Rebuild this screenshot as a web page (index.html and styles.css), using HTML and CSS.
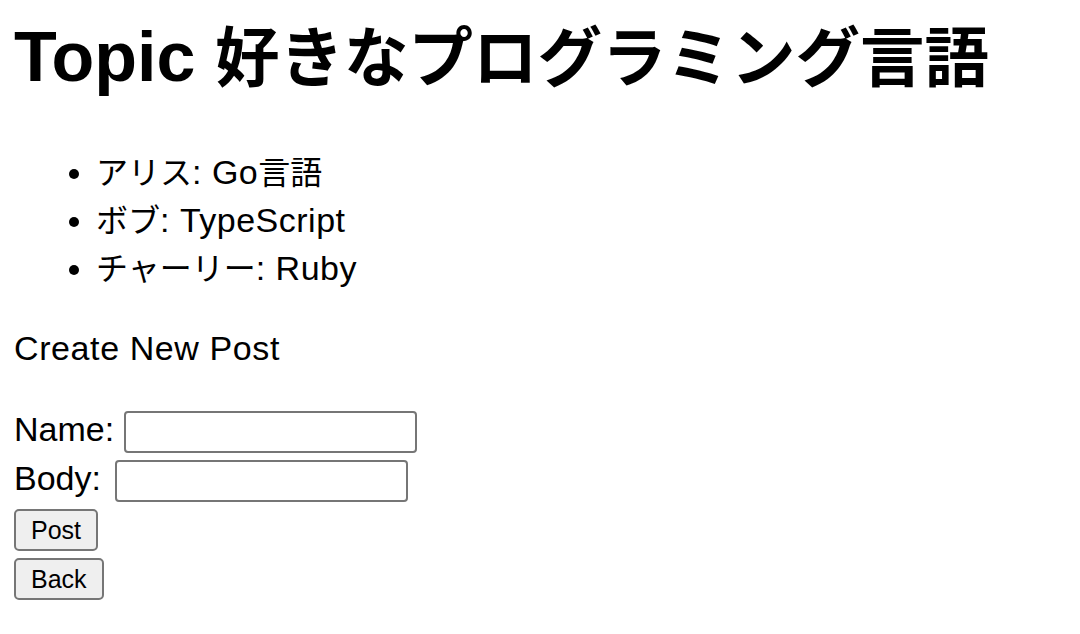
FILE: index.html
```html
<!DOCTYPE html>
<html lang="ja">
<head>
<meta charset="utf-8">
<title>Topic</title>
<link rel="stylesheet" href="styles.css">
</head>
<body>
<h1 class="title">Topic <span class="ja">好きなプログラミング言語</span></h1>
<ul class="posts">
  <li><span class="ja">アリス</span>: Go<span class="ja">言語</span></li>
  <li><span class="ja">ボブ</span>: TypeScript</li>
  <li><span class="ja">チャーリー</span>: Ruby</li>
</ul>
<p class="subtitle">Create New Post</p>
<form class="post-form">
  <div class="field name-field"><label class="label" for="name">Name:</label><input class="input" id="name" type="text"></div>
  <div class="field body-field"><label class="label label-body" for="body">Body:</label><input class="input" id="body" type="text"></div>
  <div class="field"><button class="btn" type="submit">Post</button></div>
  <div class="field"><button class="btn" type="button">Back</button></div>
</form>
</body>
</html>
```

FILE: styles.css
```css
html, body {
  background: #ffffff;
}
body {
  margin: 0;
  padding: 9px 14px 0;
  color: #000000;
  font-family: "Liberation Sans", "Noto Sans CJK JP", sans-serif;
  font-size: 34px;
}
.ja {
  font-family: "Noto Sans CJK JP", sans-serif;
  font-size: 32px;
  line-height: 1;
  letter-spacing: 0;
}
.title {
  margin: 0;
  font-size: 70px;
  font-weight: bold;
  line-height: 96px;
}
.title .ja {
  font-size: 64.5px;
}
.posts {
  margin: 43px 0 0;
  padding-left: 82px;
  line-height: 48px;
  letter-spacing: 0.5px;
}
.subtitle {
  margin: 32px 0 39px;
  line-height: 48px;
  letter-spacing: 0.6px;
}
.post-form {
  display: flex;
  flex-direction: column;
  align-items: flex-start;
  gap: 7px;
}
.field {
  display: flex;
  align-items: flex-start;
  height: 42px;
}
.label {
  line-height: 34px;
  margin-top: 1px;
  margin-right: 10px;
}
.label-body {
  margin-right: 14px;
}
.input {
  box-sizing: border-box;
  width: 293px;
  height: 42px;
  margin: 0;
  border: 2px solid #767676;
  border-radius: 4px;
  background: #ffffff;
  font-size: 24px;
}
.btn {
  box-sizing: border-box;
  height: 42px;
  margin: 0;
  padding: 0 15px;
  border: 2px solid #767676;
  border-radius: 5px;
  background: #efefef;
  color: #000000;
  font-family: "Liberation Sans", sans-serif;
  font-size: 25px;
  line-height: 38px;
}
```
